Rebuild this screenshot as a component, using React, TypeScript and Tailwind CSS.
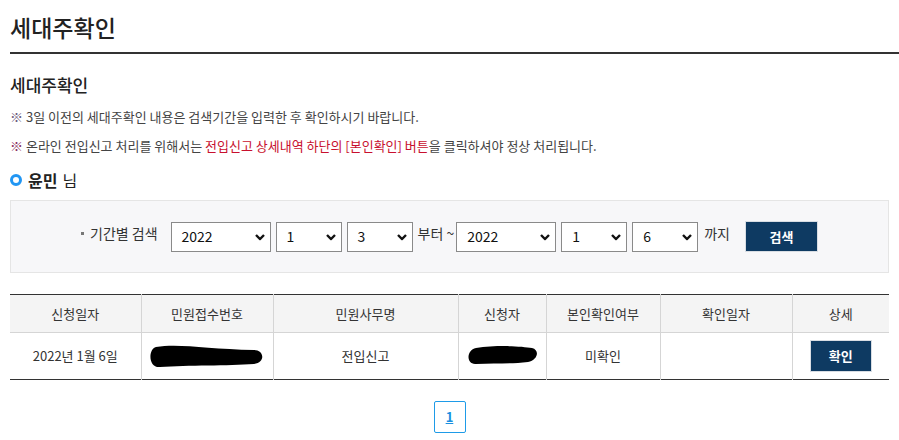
import React from 'react';

const font = { fontFamily: '"Noto Sans CJK KR", "Noto Sans", sans-serif' };

const Chevron = () => (
  <svg width="10" height="7" viewBox="0 0 10 7" className="absolute right-[5px] top-1/2 -translate-y-1/2 pointer-events-none">
    <polyline points="1,1.5 5,5.5 9,1.5" fill="none" stroke="#111" strokeWidth="2.4" />
  </svg>
);

const FakeSelect = ({ value, width }: { value: string; width: string }) => (
  <div className={`relative ${width} h-[30px] border border-[#8a8a8a] bg-white flex items-center pl-[10px] text-[14px] text-[#111]`}>
    {value}
    <Chevron />
  </div>
);

const headers = [
  { label: '신청일자', w: 'w-[131px]' },
  { label: '민원접수번호', w: 'w-[132px]' },
  { label: '민원사무명', w: 'w-[185px]' },
  { label: '신청자', w: 'w-[88px]' },
  { label: '본인확인여부', w: 'w-[114px]' },
  { label: '확인일자', w: 'w-[132px]' },
  { label: '상세', w: 'w-[97px]' },
];

export default function App() {
  return (
    <div className="w-[899px] h-[440px] bg-white pl-[10px] text-[#333] overflow-hidden" style={font}>
      <h1 className="pt-[12px] pb-[9px] leading-[31px] text-[23px] font-medium text-[#222] border-b-2 border-[#333]">세대주확인</h1>

      <div className="pr-[10px]">
        <h2 className="mt-[20px] leading-[22px] text-[17px] font-medium text-[#222]">세대주확인</h2>

        <p className="mt-[11px] leading-[20px] text-[13px] text-[#444]">
          <span className="text-[#6b5b7b]">※</span> 3일 이전의 세대주확인 내용은 검색기간을 입력한 후 확인하시기 바랍니다.
        </p>
        <p className="mt-[9px] leading-[20px] text-[13px] text-[#444]">
          <span className="text-[#8a3060]">※</span> 온라인 전입신고 처리를 위해서는{' '}
          <span className="text-[#c8102e]">전입신고 상세내역 하단의 [본인확인] 버튼</span>을 클릭하셔야 정상 처리됩니다.
        </p>

        <div className="mt-[13px] flex items-center leading-[22px]">
          <span className="w-[12px] h-[12px] rounded-full border-[3px] border-[#2196f3] bg-white" />
          <span className="ml-[6px] text-[16px] font-bold text-[#222]">윤민</span>
          <span className="ml-[5px] text-[16px] text-[#222]">님</span>
        </div>

        <div className="mt-[9px] h-[73px] border border-[#e5e5e5] bg-[#f7f7f9] flex items-center justify-center text-[14px] text-[#333]">
          <span className="mb-[6px] flex items-center">
            <span className="w-[3px] h-[3px] bg-[#777] mr-[6px]" />
            기간별 검색
          </span>
          <div className="ml-[13px] flex items-center gap-[5px]">
            <FakeSelect value="2022" width="w-[100px]" />
            <FakeSelect value="1" width="w-[66px]" />
            <FakeSelect value="3" width="w-[66px]" />
          </div>
          <span className="ml-[5px] mb-[6px]">부터 ~</span>
          <div className="ml-[2px] flex items-center gap-[5px]">
            <FakeSelect value="2022" width="w-[100px]" />
            <FakeSelect value="1" width="w-[66px]" />
            <FakeSelect value="6" width="w-[66px]" />
          </div>
          <span className="ml-[6px] mb-[6px]">까지</span>
          <button className="ml-[15px] w-[73px] h-[31px] bg-[#0e3a62] border border-[#d8dde3] text-white text-[13px] font-bold">
            검색
          </button>
        </div>

        <table className="mt-[21px] w-[879px] table-fixed border-collapse text-[13px] text-[#333]">
          <thead>
            <tr className="h-[38px] bg-[#f4f4f4] border-t border-[#333]">
              {headers.map((h, i) => (
                <th
                  key={h.label}
                  className={`${h.w} font-normal border-b border-[#d5d5d5] ${i > 0 ? 'border-l border-l-[#d5d5d5]' : ''}`}
                >
                  {h.label}
                </th>
              ))}
            </tr>
          </thead>
          <tbody>
            <tr className="h-[47px] border-b border-[#333] text-center">
              <td>2022년 1월 6일</td>
              <td className="border-l border-[#d5d5d5]">
                <svg width="118" height="26" viewBox="0 0 118 26" className="mx-auto">
                  <path d="M8 4 C30 0 60 6 106 7 C116 7 118 19 106 21 C80 23 40 22 12 24 C0 25 0 6 8 4 Z" fill="#000" />
                </svg>
              </td>
              <td className="border-l border-[#d5d5d5]">전입신고</td>
              <td className="border-l border-[#d5d5d5]">
                <svg width="72" height="22" viewBox="0 0 72 22" className="mx-auto">
                  <path d="M10 3 C30 0 55 1 66 3 C74 5 72 15 62 17 C45 19 30 18 10 19 C0 20 0 5 10 3 Z" fill="#000" />
                </svg>
              </td>
              <td className="border-l border-[#d5d5d5]">미확인</td>
              <td className="border-l border-[#d5d5d5]" />
              <td className="border-l border-[#d5d5d5]">
                <button className="w-[62px] h-[32px] bg-[#0e3a62] border border-[#d8dde3] text-white text-[13px] font-bold">
                  확인
                </button>
              </td>
            </tr>
          </tbody>
        </table>

        <div className="mt-[21px] flex justify-center">
          <span className="w-[32px] h-[32px] border border-[#1e9be8] rounded-[2px] flex items-center justify-center text-[13px] font-bold text-[#1a8fe0] underline">
            1
          </span>
        </div>
      </div>
    </div>
  );
}
